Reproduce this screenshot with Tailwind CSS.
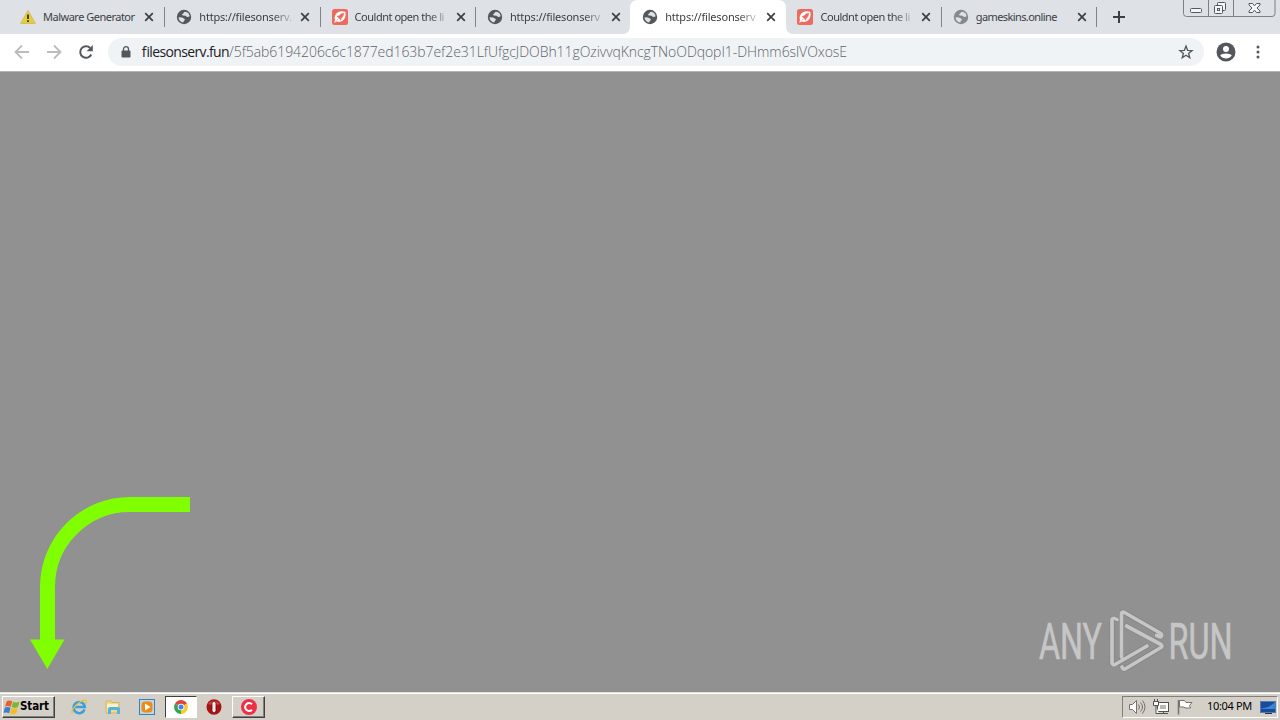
<!DOCTYPE html>
<html lang="en">
<head>
  <meta charset="UTF-8" />
  <meta name="viewport" content="width=device-width, initial-scale=1.0" />
  <title>filesonserv.fun</title>
  <script src="https://cdn.jsdelivr.net/npm/@tailwindcss/browser@4"></script>
</head>
<body class="w-[1280px] h-[720px] overflow-hidden flex flex-col bg-[#919191] font-['Noto_Sans',sans-serif]">

  <!-- Shared icons -->
  <svg class="hidden">
    <symbol id="globe" viewBox="0 0 16 16">
      <circle cx="8" cy="8" r="7.2" fill="currentColor" />
      <path d="M9 2.800C7.800 3 7.900 4.200 6.800 4.700S6 6.300 7 6.500l2.500.2c.8.2.9 1.300 2 1.200l2-.3c.2-2.600-1.700-4.600-4.500-4.800zM2.500 8.300c.1 2.700 2.100 4.900 4.800 5.200.6-1 .1-1.500.9-2s1-1.200.1-1.800L6 8.400z" fill="#dee1e6" />
    </symbol>
    <symbol id="rocket" viewBox="0 0 16 16">
      <rect width="16" height="16" rx="2.500" fill="#ed6a5e" />
      <path d="M13.200 2.800c-4-1.300-8-.2-9.700 3C2.300 8 2.500 9.500 3 11l-.8 2.800 2.600-1.200c3.700 1.200 7-.6 8.300-4 .7-2 .6-4 .1-5.800z" fill="#fff" />
      <path d="M11.800 4.200c-2.300.2-3.800 1.200-4.800 2.700l-2 .5 1.300 1L8 10l.6 1.300.8-2.200c1.400-1.200 2.200-2.700 2.400-4.900zM4.500 11.500l2-2" fill="#ed6a5e" stroke="#ed6a5e" stroke-width=".5" />
    </symbol>
    <symbol id="close" viewBox="0 0 10 10">
      <path d="M1.200 1.200l7.600 7.600M8.800 1.200L1.200 8.800" stroke="#3c4043" stroke-width="1.700" />
    </symbol>
  </svg>

  <!-- Tab strip -->
  <div class="h-[34px] shrink-0 bg-[#dee1e6] flex justify-between">
    <div class="flex pl-[9px] text-[11px] leading-[34px] text-[#3c4043]">
      <div class="w-[155.300px] flex items-center pl-[11px]">
        <svg class="size-4 shrink-0" viewBox="0 0 16 16">
          <path d="M8 1.500L15.500 14.500H.5z" fill="#e5cd38" stroke="#c9b45a" stroke-width=".7" stroke-linejoin="round" />
          <path d="M8 5.500v4.500M8 11.300v1.700" stroke="#3a3300" stroke-width="1.800" />
        </svg>
        <span class="ml-[7px] w-[97px] whitespace-nowrap tracking-[-0.5px]">Malware Generator</span>
        <svg class="size-[10px] ml-[4px]"><use href="#close" /></svg>
      </div>
      <div class="w-[155.300px] flex items-center pl-[12px] relative">
        <span class="absolute left-0 top-[7px] w-px h-5 bg-[#808387]"></span>
        <svg class="size-4 shrink-0 text-[#54575b]"><use href="#globe" /></svg>
        <span class="ml-[7px] w-[97px] whitespace-nowrap tracking-[-0.2px] mask-r-from-75%">https://filesonserv.</span>
        <svg class="size-[10px] ml-[4px]"><use href="#close" /></svg>
      </div>
      <div class="w-[155.300px] flex items-center pl-[12px] relative">
        <span class="absolute left-0 top-[7px] w-px h-5 bg-[#808387]"></span>
        <svg class="size-4 shrink-0"><use href="#rocket" /></svg>
        <span class="ml-[7px] w-[97px] whitespace-nowrap tracking-[-0.48px] mask-r-from-75%">Couldnt open the li</span>
        <svg class="size-[10px] ml-[4px]"><use href="#close" /></svg>
      </div>
      <div class="w-[155.300px] flex items-center pl-[12px] relative">
        <span class="absolute left-0 top-[7px] w-px h-5 bg-[#808387]"></span>
        <svg class="size-4 shrink-0 text-[#54575b]"><use href="#globe" /></svg>
        <span class="ml-[7px] w-[97px] whitespace-nowrap tracking-[-0.2px] mask-r-from-75%">https://filesonserv</span>
        <svg class="size-[10px] ml-[4px]"><use href="#close" /></svg>
      </div>
      <!-- Active tab -->
      <div class="w-[155.300px] flex items-center pl-[12px] relative">
        <svg class="absolute -left-[8px] top-0 w-[172px] h-[34px]" viewBox="0 0 172 34">
          <path d="M0 34q8 0 8-8V8q0-8 8-8H156q8 0 8 8v18q0 8 8 8z" fill="#fff" />
        </svg>
        <svg class="relative size-4 shrink-0 text-[#54575b]"><use href="#globe" /></svg>
        <span class="relative ml-[7px] w-[97px] whitespace-nowrap tracking-[-0.2px] mask-r-from-75%">https://filesonserv</span>
        <svg class="relative size-[10px] ml-[4px]"><use href="#close" /></svg>
      </div>
      <div class="w-[155.300px] flex items-center pl-[12px]">
        <svg class="size-4 shrink-0"><use href="#rocket" /></svg>
        <span class="ml-[7px] w-[97px] whitespace-nowrap tracking-[-0.48px] mask-r-from-75%">Couldnt open the li</span>
        <svg class="size-[10px] ml-[4px]"><use href="#close" /></svg>
      </div>
      <div class="w-[155.300px] flex items-center pl-[12px] relative">
        <span class="absolute left-0 top-[7px] w-px h-5 bg-[#808387]"></span>
        <svg class="size-4 shrink-0 text-[#85888c]"><use href="#globe" /></svg>
        <span class="ml-[7px] w-[97px] whitespace-nowrap tracking-[-0.6px]">gameskins.online</span>
        <svg class="size-[10px] ml-[4px]"><use href="#close" /></svg>
      </div>
      <div class="w-[40px] flex items-center pl-[17px] relative">
        <span class="absolute left-0 top-[7px] w-px h-5 bg-[#808387]"></span>
        <svg class="size-3" viewBox="0 0 12 12"><path d="M6 0v12M0 6h12" stroke="#3c4043" stroke-width="2" /></svg>
      </div>
    </div>

    <!-- Window buttons -->
    <svg class="w-[97px] h-[20px]" viewBox="0 0 97 20" fill="none" stroke="#7c8089">
      <path d="M.5 0v13.500q0 3 3 3h85.500q3 0 3-3V0M25.500 0v16.500M50.500 0v16.500" />
      <g stroke="#53575f" fill="#f5f6f8">
        <rect x="7.500" y="8.500" width="11" height="4" rx="1" />
        <rect x="34.500" y="2.500" width="8" height="8" rx="1" />
        <rect x="31.500" y="5.500" width="8" height="8" rx="1" />
        <rect x="34.500" y="8.500" width="2" height="2" />
        <path d="M66 3.500h3.500l2 2.300 2-2.300H77v1.500L74 8l3 3v1.500h-3.500l-2-2.300-2 2.300H66V11l3-3-3-3z" />
      </g>
    </svg>
  </div>

  <!-- Toolbar -->
  <div class="h-[38px] shrink-0 bg-white border-b border-[#b4b4b4] flex items-center pb-px pl-[14px] pr-[14px]">
    <svg class="size-4" viewBox="0 0 16 16" fill="none" stroke="#babcbe" stroke-width="1.800"><path d="M15 8H2M8 1.500L1.500 8 8 14.500" /></svg>
    <svg class="size-4 ml-4" viewBox="0 0 16 16" fill="none" stroke="#babcbe" stroke-width="1.800"><path d="M1 8h13M8 1.500L14.500 8 8 14.500" /></svg>
    <svg class="size-4 ml-4" viewBox="0 0 16 16"><path d="M13.300 10.500A5.800 5.800 0 1 1 12.200 4" fill="none" stroke="#54575b" stroke-width="2" /><path d="M14.800 1v6.200H8.600z" fill="#54575b" /></svg>
    <div class="ml-[14px] w-[1096px] h-7 rounded-full bg-[#f0f3f5] flex items-center pl-[13px] pr-[10px]">
      <svg class="w-[10px] h-[12px]" viewBox="0 0 10 12"><rect x=".5" y="4.500" width="9" height="7" rx="1" fill="#54575b" /><path d="M2.500 5V3.200a2.500 2.500 0 0 1 5 0V5" fill="none" stroke="#54575b" stroke-width="1.300" /></svg>
      <svg class="ml-[10px] w-[710px] h-7 font-['Open_Sans',sans-serif] text-[14px]" viewBox="0 0 710 28">
        <text x="0" y="19" textLength="88" fill="#202124" font-weight="400">filesonserv.fun</text>
        <text x="88" y="19" textLength="618" fill="#5f6368" font-weight="300">/5f5ab6194206c6c1877ed163b7ef2e31LfUfgcJDOBh11gOzivvqKncgTNoODqopI1-DHmm6slVOxosE</text>
      </svg>
      <svg class="ml-auto size-4" viewBox="0 0 16 16"><path d="M8 2l1.600 4.300 4.500.2-3.500 2.900 1.200 4.400L8 11.300l-3.800 2.500 1.200-4.400-3.500-2.900 4.500-.2z" fill="none" stroke="#54575b" stroke-width="1.300" /></svg>
    </div>
    <svg class="ml-[12px] size-5" viewBox="0 0 20 20"><circle cx="10" cy="10" r="9.500" fill="#54575b" /><circle cx="10" cy="7" r="3" fill="#fff" /><path d="M4.200 13.500c1-2.700 10.600-2.700 11.600 0-2.600 4-9 4-11.600 0z" fill="#fff" /></svg>
    <svg class="ml-auto mr-[6px] w-1 h-4" viewBox="0 0 4 16" fill="#54575b"><circle cx="2" cy="3" r="1.500" /><circle cx="2" cy="8" r="1.500" /><circle cx="2" cy="13" r="1.500" /></svg>
  </div>

  <!-- Page -->
  <main class="h-[620px] shrink-0 flex justify-between items-end pl-[30px] pr-[40px]">
    <svg class="w-[160px] h-[172px] mb-[23px]" viewBox="30 497 160 172">
      <path d="M190 504.500H130A82.500 82.500 0 0 0 47.500 587V640" fill="none" stroke="#80ff00" stroke-width="15" />
      <path d="M30 639.500h34.500L47.300 669z" fill="#80ff00" />
    </svg>
    <svg class="w-[210px] h-[80px] mb-[12px] font-['Roboto',sans-serif] text-[50px]" viewBox="1030 600 210 80">
      <g fill="#c6c6c6" stroke="#c6c6c6" stroke-width=".6">
        <text x="1039" y="659" textLength="63" lengthAdjust="spacingAndGlyphs">ANY</text>
        <text x="1168.500" y="659" textLength="64" lengthAdjust="spacingAndGlyphs">RUN</text>
      </g>
      <g transform="translate(1100 604)" fill="none" stroke-linejoin="round" stroke-linecap="round">
        <path d="M21.500 53V9q1-1.500 3-.5L61 29.500q1.500 2-.5 3.500l-4-1.500M26.500 22L61 40.500q2 1.500 0 3L25 65q-2 .5-3-2M17 15.500q-4-2.500-5 0V59q.5 2.500 3 1.500L47 42" stroke="#838383" stroke-width="5" />
        <path d="M21.500 53V9q1-1.500 3-.5L61 29.500q1.500 2-.5 3.500l-4-1.500M26.500 22L61 40.500q2 1.500 0 3L25 65q-2 .5-3-2M17 15.500q-4-2.500-5 0V59q.5 2.500 3 1.500L47 42" stroke="#c6c6c6" stroke-width="3.700" />
      </g>
    </svg>
  </main>

  <!-- Taskbar -->
  <div class="h-7 shrink-0 bg-[#d4d0c8] border-t border-[#e4e2dd] shadow-[inset_0_1px_0_#fff] flex items-center pr-[2px] font-['Liberation_Sans',sans-serif]">
    <div class="ml-[2px] w-[53px] h-[22px] border border-t-white border-l-white border-r-[#404040] border-b-[#404040] shadow-[inset_-1px_-1px_0_#808080] flex items-center">
      <svg class="w-[17px] h-[16px] shrink-0" viewBox="0 0 15 15">
        <path d="M3 2q3-1.500 5.200.2L6.800 7.300Q4.500 6 1.500 7z" fill="#e8602c" />
        <path d="M9 2.500q3 1.500 6 0L13.600 7.600q-3 1.500-6 0z" fill="#7db72f" />
        <path d="M1.300 8q3-1 5.300.3L5.200 13.400Q3 12 0 13z" fill="#3a7ed0" />
        <path d="M7.400 8.500q3 1.500 6 0L12 13.700q-3 1.500-6 0z" fill="#f5bd25" />
      </svg>
      <span class="font-['DejaVu_Sans_Condensed','DejaVu_Sans',sans-serif] font-bold text-[11.500px] tracking-[-0.1px] text-black">Start</span>
    </div>
    <svg class="ml-[16px] size-4" viewBox="0 0 16 16">
      <path d="M13.500 10.500A5.600 5.600 0 1 1 13.800 8H4" fill="none" stroke="#3d9fdc" stroke-width="2.600" />
      <path d="M1.500 14.500C-1.500 11 11-1 15 1.500c1 .8.300 2.300-.5 3.500" fill="none" stroke="#e9bf3d" stroke-width="1.200" />
    </svg>
    <svg class="ml-[18px] size-4" viewBox="0 0 16 16">
      <path d="M1 2h5l1 1.500h7V14H1z" fill="#efd98a" stroke="#cfae50" stroke-width=".7" />
      <path d="M2 5h11v4H2z" fill="#faf2c9" />
      <path d="M3 15V10q0-2 2-2h8q2 0 2 2v5h-3v-4H6v4z" fill="#58b3dc" />
    </svg>
    <svg class="ml-[18px] size-4" viewBox="0 0 16 16">
      <rect x=".5" y=".5" width="15" height="15" fill="#b7d9f3" stroke="#3e7fb8" />
      <rect x="2.500" y="2.500" width="11" height="11" rx="3.500" fill="#f28a12" /><path d="M6 4.500v7L11.500 8z" fill="#fff" />
    </svg>
    <div class="ml-[10px] w-[32px] h-[22px] bg-white border border-t-[#404040] border-l-[#404040] border-r-white border-b-white flex items-center justify-center">
      <svg class="size-[14px]" viewBox="0 0 14 14">
        <path d="M7 7L1 3.500A7 7 0 0 1 13 3.500z" fill="#e0453a" />
        <path d="M7 7L13 3.500A7 7 0 0 1 7 14z" fill="#f9cb2e" />
        <path d="M7 7v7A7 7 0 0 1 1 3.500z" fill="#38a352" />
        <circle cx="7" cy="7" r="3.300" fill="#fff" /><circle cx="7" cy="7" r="2.500" fill="#4482ed" />
      </svg>
    </div>
    <svg class="ml-[9px] size-4" viewBox="0 0 16 16"><ellipse cx="8" cy="8" rx="7.500" ry="7.800" fill="#a81416" /><path d="M2 5q6-6.500 12 0-6 2-12 0z" fill="#cc4a45" /><rect x="6" y="2.500" width="4" height="11" rx="1.800" fill="#f4ecea" stroke="#6d0808" stroke-width=".8" /></svg>
    <div class="ml-[10px] w-[33px] h-[22px] border border-t-white border-l-white border-r-[#404040] border-b-[#404040] shadow-[inset_-1px_-1px_0_#808080] flex items-center justify-center">
      <svg class="size-4" viewBox="0 0 16 16"><circle cx="8" cy="8" r="8" fill="#ee2e45" /><path d="M11 5.200a4 4 0 1 0 0 5.600" fill="none" stroke="#fff" stroke-width="2.100" /></svg>
    </div>

    <!-- Tray -->
    <div class="ml-auto w-[156px] h-[22px] border border-t-[#808080] border-l-[#808080] border-r-white border-b-white flex items-center pl-[6px]">
      <svg class="w-[17px] h-4" viewBox="0 0 17 16" fill="none" stroke="#75726d"><path d="M.5 5.500h3l4-4v13l-4-4h-3z" fill="#fff" /><path d="M9.500 5.500q2 2.500 0 5M11.500 3.500q4 4.500 0 9M13.500 1.500q5 6.500 0 13" /></svg>
      <svg class="ml-[7px] size-4" viewBox="0 0 16 16" fill="#fff" stroke="#55524e"><rect x="4.500" y="3.500" width="11" height="9" /><path d="M6 14.500h9M10.500 13v2" /><rect x="7" y="6" width="6" height="4" fill="#bbb8b2" stroke="none" /><path d="M.5 2.500h5v4h-5zM1.500 0v2M4.500 0v2M3 7v7.500h3" /></svg>
      <svg class="ml-[8px] size-4" viewBox="0 0 16 16" fill="#fff" stroke="#75726d"><path d="M1.500 1v14.500" stroke-width="1.500" /><path d="M2.500 1.500h5l1.500 2h6l-2.500 3 1 2.500H8L7 8H2.500z" /></svg>
      <span class="ml-[14px] font-['Noto_Sans',sans-serif] text-[11px] tracking-[-0.35px] whitespace-nowrap text-black">10:04 PM</span>
      <svg class="ml-auto mr-[1px] size-4" viewBox="0 0 16 16"><rect x=".5" y="2.500" width="15" height="11" fill="#174c9c" stroke="#587cb0" /><path d="M1 9q7 1 14-6v7H1z" fill="#3c83d4" /><path d="M5 14.500h7" stroke="#334" /></svg>
    </div>
  </div>

</body>
</html>
